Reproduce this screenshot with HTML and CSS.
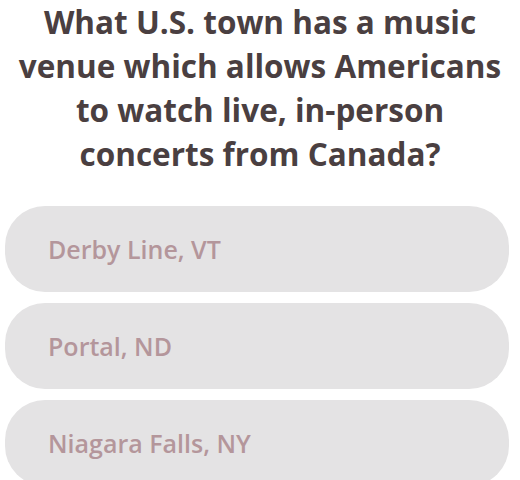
FILE: index.html
```html
<!DOCTYPE html>
<html>
<head>
<meta charset="utf-8">
<link rel="stylesheet" href="styles.css">
</head>
<body>
<div class="quiz">
  <h1 class="question">What U.S. town has a music<br>venue which allows Americans<br>to watch live, in-person<br>concerts from Canada?</h1>
  <div class="answers">
    <div class="answer">Derby Line, VT</div>
    <div class="answer">Portal, ND</div>
    <div class="answer">Niagara Falls, NY</div>
  </div>
</div>
</body>
</html>
```
FILE: styles.css
```css
html, body {
  margin: 0;
  padding: 0;
  background: #ffffff;
  overflow: hidden;
}
.quiz {
  width: 520px;
  height: 480px;
  font-family: "Open Sans", "Noto Sans", sans-serif;
}
.question {
  margin: 0;
  padding: 0;
  text-align: center;
  font-size: 31.5px;
  line-height: 44px;
  font-weight: 700;
  color: #4a3f41;
  white-space: nowrap;
}
.answers {
  display: flex;
  flex-direction: column;
  gap: 11px;
  padding: 30px 11px 0 5px;
}
.answer {
  height: 86px;
  border-radius: 40px;
  background: #e4e3e4;
  display: flex;
  align-items: center;
  padding-left: 43px;
  font-size: 25px;
  font-weight: 600;
  color: #b4969b;
}
```
